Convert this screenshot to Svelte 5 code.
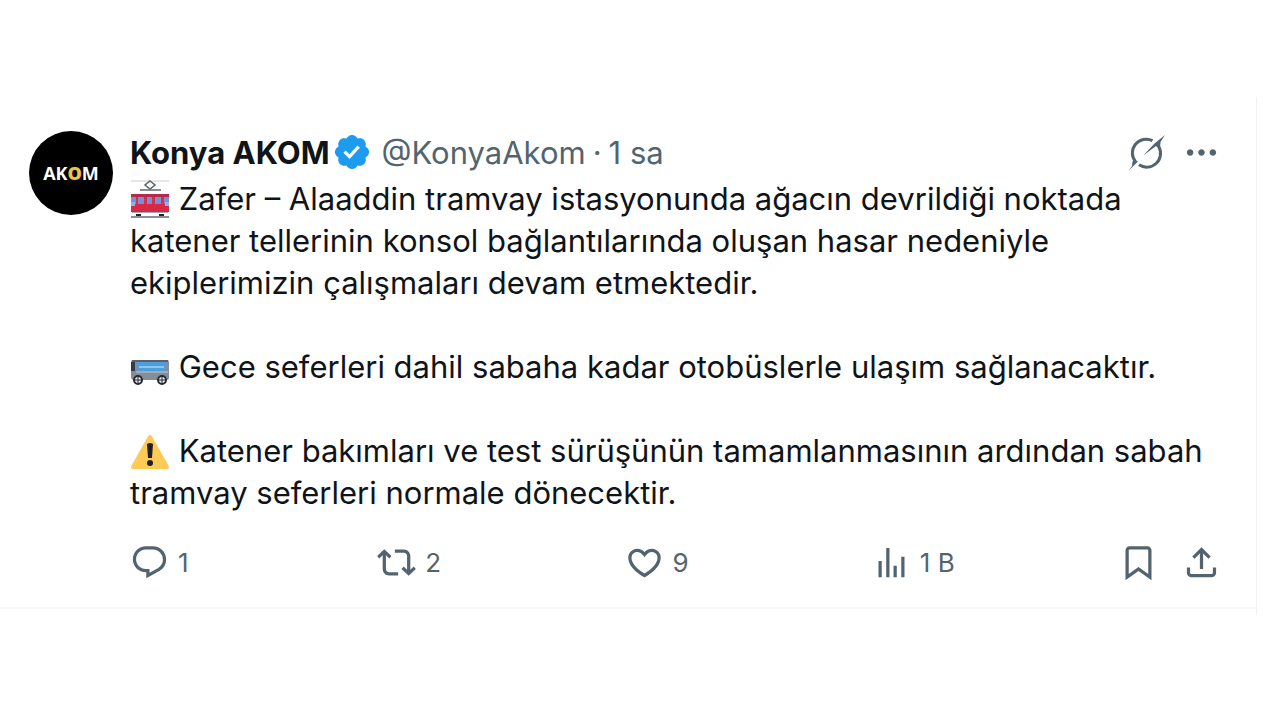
<script>
    const author = { name: 'Konya AKOM', handle: '@KonyaAkom', time: '1 sa' };

    // each paragraph starts with its own little picture
    const paragraphs = [
        {
            icon: 'tram',
            text: 'Zafer – Alaaddin tramvay istasyonunda ağacın devrildiği noktada katener tellerinin konsol bağlantılarında oluşan hasar nedeniyle ekiplerimizin çalışmaları devam etmektedir.'
        },
        {
            icon: 'bus',
            text: 'Gece seferleri dahil sabaha kadar otobüslerle ulaşım sağlanacaktır.'
        },
        {
            icon: 'warning',
            text: 'Katener bakımları ve test sürüşünün tamamlanmasının ardından sabah tramvay seferleri normale dönecektir.'
        }
    ];

    const actions = [
        {
            label: 'Yanıtla',
            count: '1',
            path: 'M1.751 10c0-4.42 3.584-8 8.005-8h4.366c4.49 0 8.129 3.64 8.129 8.13 0 2.96-1.607 5.68-4.196 7.11l-8.054 4.46v-3.69h-.067c-4.49.1-8.183-3.51-8.183-8.01zm8.005-6c-3.317 0-6.005 2.69-6.005 6 0 3.37 2.77 6.08 6.138 6.01l.351-.01h1.761v2.3l5.087-2.81c1.951-1.08 3.163-3.13 3.163-5.36 0-3.39-2.744-6.13-6.129-6.13H9.756z'
        },
        {
            label: 'Yeniden gönder',
            count: '2',
            path: 'M4.5 3.88l4.432 4.14-1.364 1.46L5.5 7.55V16c0 1.1.896 2 2 2H13v2H7.5c-2.209 0-4-1.79-4-4V7.55L1.432 9.48.068 8.02 4.5 3.88zM16.5 6H11V4h5.5c2.209 0 4 1.79 4 4v8.45l2.068-1.93 1.364 1.46-4.432 4.14-4.432-4.14 1.364-1.46 2.068 1.93V8c0-1.1-.896-2-2-2z'
        },
        {
            label: 'Beğen',
            count: '9',
            path: 'M16.697 5.5c-1.222-.06-2.679.51-3.89 2.16l-.805 1.09-.806-1.09C9.984 6.01 8.526 5.44 7.304 5.5c-1.243.07-2.349.78-2.91 1.91-.552 1.12-.633 2.78.479 4.82 1.074 1.97 3.257 4.27 7.129 6.61 3.87-2.34 6.052-4.64 7.126-6.61 1.111-2.04 1.03-3.7.477-4.82-.561-1.13-1.666-1.84-2.908-1.91zm4.187 7.69c-1.351 2.48-4.001 5.12-8.379 7.67l-.503.3-.504-.3c-4.379-2.55-7.029-5.19-8.382-7.67-1.36-2.5-1.41-4.86-.514-6.67.887-1.79 2.647-2.91 4.601-3.01 1.651-.09 3.368.56 4.798 2.01 1.429-1.45 3.146-2.1 4.796-2.01 1.954.1 3.714 1.22 4.601 3.01.896 1.81.846 4.17-.514 6.67z'
        },
        {
            label: 'Görüntülenme',
            count: '1 B',
            path: 'M8.75 21V3h2v18h-2zM18 21V8.5h2V21h-2zM4 21l.004-10h2L6 21H4zm9.248 0v-7h2v7h-2z'
        }
    ];
</script>

<main class="timeline">
    <article class="post">
        <a class="avatar" href="#profile" aria-label={author.name}>
            <span>AK<b>O</b>M</span>
        </a>

        <div class="content">
            <header>
                <a class="name" href="#profile">{author.name}</a>
                <svg class="badge" viewBox="0 0 22 22" aria-hidden="true">
                    <path fill="#1d9bf0" d="M20.396 11c-.018-.646-.215-1.275-.57-1.816-.354-.54-.852-.972-1.438-1.246.223-.607.27-1.264.14-1.897-.131-.634-.437-1.218-.882-1.687-.47-.445-1.053-.75-1.687-.882-.633-.13-1.29-.083-1.897.14-.273-.587-.704-1.086-1.245-1.44S11.647 1.62 11 1.604c-.646.017-1.273.213-1.813.568s-.969.854-1.24 1.44c-.608-.223-1.267-.272-1.902-.14-.635.13-1.22.436-1.69.882-.445.47-.749 1.055-.878 1.688-.13.633-.08 1.29.144 1.896-.587.274-1.087.705-1.443 1.245-.356.54-.555 1.17-.574 1.817.02.647.218 1.276.574 1.817.356.54.856.972 1.443 1.245-.224.606-.274 1.263-.144 1.896.13.634.433 1.218.877 1.688.47.443 1.054.747 1.687.878.633.132 1.29.084 1.897-.136.274.586.705 1.084 1.246 1.439.54.354 1.17.551 1.816.569.647-.016 1.276-.213 1.817-.567s.972-.854 1.245-1.44c.604.239 1.266.296 1.903.164.636-.132 1.22-.447 1.68-.907.46-.46.776-1.044.908-1.681s.075-1.299-.165-1.903c.586-.274 1.084-.705 1.439-1.246.354-.54.551-1.17.569-1.816z" />
                    <path fill="#fff" d="M9.662 14.85l-3.429-3.428 1.293-1.302 2.072 2.072 4.4-4.794 1.347 1.246z" />
                </svg>
                <a class="meta" href="#profile">{author.handle}</a>
                <span class="meta dot">·</span>
                <a class="meta time" href="#post">{author.time}</a>

                <div class="tools">
                    <button aria-label="Grok">
                        <svg viewBox="0 0 39 39">
                            <path d="M9.500 28.700A13.800 13.800 0 0 1 26.500 7.700M32.700 13.500A13.800 13.800 0 0 1 13 31.800" fill="none" stroke="currentColor" stroke-width="3" />
                            <path d="M39 2L34.500 9 34 15 31 14 30 13 17.300 22.500 28.500 10.500zM2.300 38L6 33 6.500 28.500 9 27 12 28.500z" />
                        </svg>
                    </button>
                    <button aria-label="Daha fazla">
                        <svg viewBox="0 0 24 24">
                            <path d="M3 12c0-1.1.9-2 2-2s2 .9 2 2-.9 2-2 2-2-.9-2-2zm9 2c1.1 0 2-.9 2-2s-.9-2-2-2-2 .9-2 2 .9 2 2 2zm7 0c1.1 0 2-.9 2-2s-.9-2-2-2-2 .9-2 2 .9 2 2 2z" />
                        </svg>
                    </button>
                </div>
            </header>

            <div class="text">
                {#each paragraphs as p}
                    <p>
                        {#if p.icon === 'tram'}
                            <svg class="emoji" viewBox="0 0 40 40" aria-hidden="true">
                                <path d="M1 1h38" stroke="#c9cdd2" />
                                <path d="M20 1l5 4-5 4-5-4z" fill="#fff" stroke="#59616b" stroke-width="1.500" />
                                <path d="M10 10h21M1 37h38" stroke="#646a72" stroke-width="1.500" />
                                <rect x="1" y="14" width="38" height="3" fill="#b5294a" />
                                <rect x="1" y="17" width="38" height="9" fill="#7c8fd0" />
                                <path d="M6 17h2v8H6zM14 17h3v8h-3zM22 17h3v8h-3zM31 17h3v8h-3z" fill="#c93555" />
                                <rect x="1" y="24" width="38" height="8" fill="#d92746" />
                                <path d="M1 22h4v4H1zM35 22h4v4h-4z" fill="#8fb0e8" />
                                <path d="M2 32h36v1H2z" fill="#a5a9b4" />
                                <path d="M6 34h5v2H6zM29 34h5v2h-5z" fill="#20242a" />
                            </svg>
                        {:else if p.icon === 'bus'}
                            <svg class="emoji" viewBox="0 0 40 40" aria-hidden="true">
                                <path d="M3 12h34q2 0 2 2v16q0 2-2 2H4q-3 0-3-3V14q0-2 2-2z" fill="#858d98" />
                                <path d="M2 12h36v2H2z" fill="#59616c" />
                                <path d="M7 14h29v9H7z" fill="#4f9edb" />
                                <path d="M9 18h25v2H9z" fill="#8bc6f2" />
                                <path d="M1 14h4v9H1z" fill="#2c3d50" />
                                <path d="M6 23h32v2H6z" fill="#a5abb4" />
                                <circle cx="8" cy="32" r="4" fill="#eee" stroke="#252b31" stroke-width="2" />
                                <circle cx="32" cy="32" r="4" fill="#eee" stroke="#252b31" stroke-width="2" />
                                <path d="M5 32h6M8 29v6M29 32h6M32 29v6" stroke="#252b31" />
                            </svg>
                        {:else}
                            <svg class="emoji" viewBox="0 0 40 40" aria-hidden="true">
                                <path d="M20 5L37 35H3z" fill="#fdca55" stroke="#fdca55" stroke-width="4" stroke-linejoin="round" />
                                <path d="M17 12q3-2 6 0l-1 14h-4z" fill="#231f20" />
                                <circle cx="20" cy="31" r="3" fill="#231f20" />
                            </svg>
                        {/if}
                        {p.text}
                    </p>
                {/each}
            </div>

            <footer>
                {#each actions as action}
                    <div class="slot">
                        <button aria-label={action.label}>
                            <svg viewBox="0 0 24 24"><path d={action.path} /></svg>
                            <span>{action.count}</span>
                        </button>
                    </div>
                {/each}
                <div class="end">
                    <button aria-label="Yer işareti">
                        <svg viewBox="0 0 24 24">
                            <path d="M4 4.500C4 3.120 5.119 2 6.500 2h11C18.881 2 20 3.120 20 4.500v18.440l-8-5.710-8 5.710V4.500zM6.500 4c-.276 0-.5.220-.5.500v14.560l6-4.290 6 4.290V4.500c0-.280-.224-.500-.500-.500h-11z" />
                        </svg>
                    </button>
                    <button aria-label="Paylaş">
                        <svg viewBox="0 0 24 24">
                            <path d="M12 2.590l5.700 5.700-1.410 1.420L13 6.410V16h-2V6.410l-3.300 3.300-1.410-1.420L12 2.590zM21 15l-.020 3.510c0 1.380-1.120 2.490-2.500 2.490H5.500C4.110 21 3 19.880 3 18.500V15h2v3.500c0 .280.220.500.500.500h12.980c.280 0 .500-.220.500-.500L19 15h2z" />
                        </svg>
                    </button>
                </div>
            </footer>
        </div>
    </article>
</main>

<style>
    :global(body) {
        background: #fff;
        font-family: Inter, Roboto, sans-serif;
        color: #0f1419;
    }

    .timeline {
        margin: 97px 23px 0 0;
        padding-bottom: 6px;
        border-right: 1px solid #eff3f4;
    }

    .post {
        display: flex;
        gap: 17px;
        padding: 34px 35px 25px 29px;
        border-bottom: 2px solid #f7f9f9;
    }

    .avatar {
        display: flex;
        align-items: center;
        justify-content: center;
        flex: none;
        width: 84px;
        height: 84px;
        border-radius: 50%;
        background: #000;
        color: #fff;
        font: 700 18px/20px 'Open Sans', sans-serif;
        text-decoration: none;
    }

    .avatar b {
        color: #f0c04a;
    }

    .content {
        flex: 1;
        min-width: 0;
    }

    header {
        display: flex;
        align-items: center;
        height: 42px;
        margin-bottom: 5px;
        font-size: 31px;
    }

    header a {
        text-decoration: none;
    }

    .name {
        color: #0f1419;
        font-weight: 700;
    }

    .badge {
        width: 40px;
        height: 40px;
        margin: 0 10px 0 2px;
    }

    .meta {
        color: #536471;
    }

    .dot {
        padding: 0 7px;
    }

    .tools {
        display: flex;
        gap: 17px;
        margin-left: auto;
    }

    button {
        display: flex;
        align-items: center;
        padding: 0;
        border: 0;
        background: none;
        color: #536471;
        font: inherit;
        cursor: pointer;
    }

    button svg {
        width: 39px;
        height: 39px;
        fill: currentColor;
    }

    .text {
        font-size: 31px;
        line-height: 42px;
    }

    p {
        margin: 0 0 42px;
    }

    p:last-child {
        margin-bottom: 0;
    }

    .emoji {
        width: 40px;
        height: 40px;
        margin-bottom: -2px;
        vertical-align: -8px;
    }

    footer {
        display: flex;
        margin-top: 29px;
        font-size: 26px;
    }

    .slot {
        flex: 1;
    }

    .slot span {
        padding-left: 9px;
    }

    .end {
        display: flex;
        gap: 24px;
    }
</style>
